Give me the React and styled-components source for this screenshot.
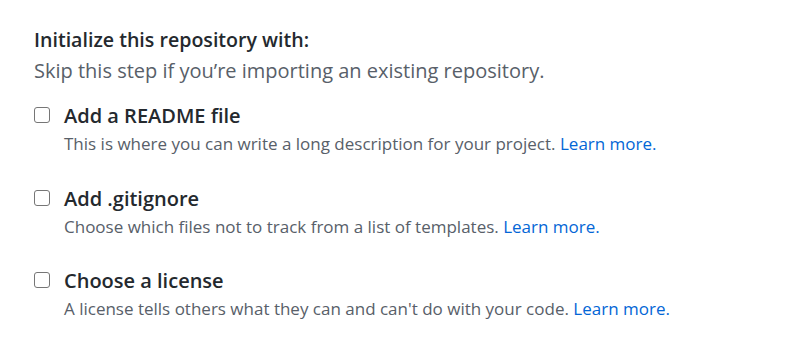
import React from "react";
import styled, { createGlobalStyle } from "styled-components";

const Global = createGlobalStyle`
  html, body { margin: 0; padding: 0; background: #ffffff; }
  body { font-family: "Open Sans", "Noto Sans", sans-serif; -webkit-font-smoothing: antialiased; }
`;

const Page = styled.div`
  width: 804px;
  height: 345px;
  box-sizing: border-box;
  padding: 27px 34px 0;
  background: #fff;
`;

const Heading = styled.h3`
  margin: 0;
  font-size: 19.6px;
  line-height: 26px;
  font-weight: 600;
  color: #24292e;
`;

const Sub = styled.p`
  margin: 5px 0 0;
  font-size: 20px;
  line-height: 26px;
  color: #586069;
`;

const List = styled.div`
  display: flex;
  flex-direction: column;
  gap: 28.5px;
  margin-top: 19px;
`;

const Option = styled.label`
  display: grid;
  grid-template-columns: 16px 1fr;
  column-gap: 14px;
  row-gap: 2px;
  align-items: start;
`;

const Box = styled.span`
  width: 16px;
  height: 16px;
  margin-top: 4px;
  box-sizing: border-box;
  border: 1px solid #767676;
  border-radius: 3px;
  background: #fff;
`;

const Label = styled.span`
  font-size: 20px;
  line-height: 26px;
  font-weight: 600;
  color: #24292e;
`;

const Desc = styled.span`
  grid-column: 2;
  font-size: 17px;
  line-height: 26px;
  color: #586069;
`;

const Link = styled.a`
  color: #0366d6;
  text-decoration: none;
`;

const options = [
  { label: "Add a README file", desc: "This is where you can write a long description for your project." },
  { label: "Add .gitignore", desc: "Choose which files not to track from a list of templates." },
  { label: "Choose a license", desc: "A license tells others what they can and can't do with your code." },
];

export default function App() {
  return (
    <Page>
      <Global />
      <Heading>Initialize this repository with:</Heading>
      <Sub>Skip this step if you’re importing an existing repository.</Sub>
      <List>
        {options.map((o) => (
          <Option key={o.label}>
            <Box />
            <Label>{o.label}</Label>
            <Desc>
              {o.desc} <Link href="#">Learn more.</Link>
            </Desc>
          </Option>
        ))}
      </List>
    </Page>
  );
}
